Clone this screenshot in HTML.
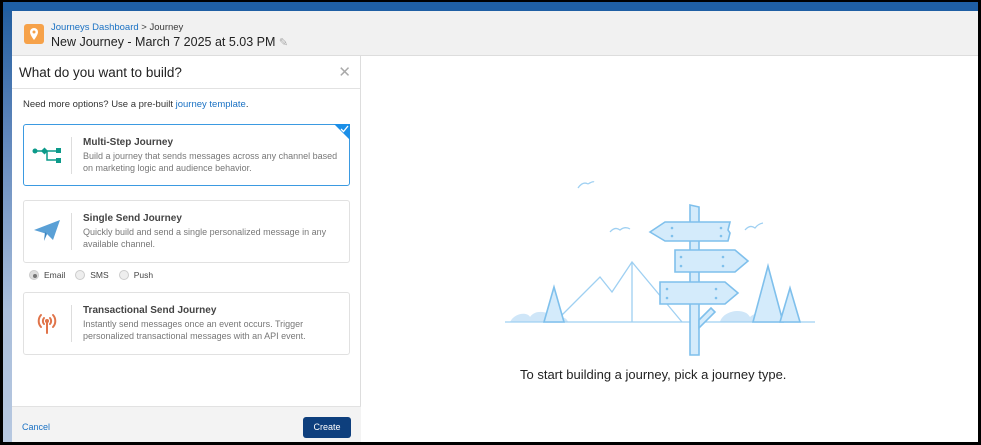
<!DOCTYPE html>
<html><head><style>
*{box-sizing:border-box;margin:0;padding:0}
body{width:981px;height:445px;overflow:hidden;background:#000;font-family:"Liberation Sans",sans-serif;position:relative}
.frame{position:absolute;left:3px;top:2px;width:975px;height:440px;background:#fff;overflow:hidden}
.strip{position:absolute;left:0;top:0;width:9px;height:440px;background:linear-gradient(#1f5c9e 0%,#5f86bb 30%,#a9bedb 70%,#b7c8e0 100%)}
.topband{position:absolute;left:0;top:0;width:975px;height:9px;background:#1f5fa4}
.hdr{position:absolute;left:9px;top:9px;width:966px;height:45px;background:#f1f1f1;border-bottom:1px solid #ddd}
.logo{position:absolute;left:12px;top:13px;width:20px;height:20px;background:#f6a24a;border-radius:3px}
.crumb{position:absolute;left:39px;top:11px;font-size:9.5px;color:#3a3a3a}
.crumb a{color:#1b72c4}
.title{position:absolute;left:39px;top:24px;font-size:12.5px;color:#222}
.panel{position:absolute;left:9px;top:54px;width:349px;height:386px;background:#fff;border-right:1px solid #ddd}
.ph{height:33px;border-bottom:1px solid #e2e2e2;font-size:13.5px;color:#222;padding:9px 0 0 7px;position:relative}
.x{position:absolute;right:9px;top:7px;font-size:15px;color:#aaa}
.need{position:absolute;left:11px;top:43px;font-size:9.5px;color:#333}
.need a{color:#1b72c4}
.card{position:absolute;left:11px;width:327px;background:#fff;border:1px solid #e1e1e1;border-radius:3px}
.card .ic{position:absolute;left:8px;top:14px;width:30px;height:30px}
.card .sep{position:absolute;left:47px;top:12px;width:1px;height:37px;background:#ddd}
.card h4{position:absolute;left:59px;top:12px;font-size:10px;color:#444;font-weight:bold}
.card p{position:absolute;left:59px;top:25px;font-size:9px;color:#777;line-height:12px;width:265px}
.radios{position:absolute;left:17px;top:214px;font-size:8.5px;color:#444}
.radios span{display:inline-block;margin-right:10px}
.radios i{display:inline-block;width:10px;height:10px;border-radius:50%;border:1px solid #ccc;background:#eee;vertical-align:-2px;margin-right:5px;position:relative}
.foot{position:absolute;left:0;top:350px;width:349px;height:36px;background:#f3f3f3;border-top:1px solid #e2e2e2}
.cancel{position:absolute;left:10px;top:15px;font-size:9px;color:#1b72c4}
.create{position:absolute;right:10px;top:10px;width:48px;height:21px;background:#0e3f7d;color:#fff;font-size:9px;text-align:center;line-height:21px;border-radius:3px}
.msg{position:absolute;left:517px;top:365px;font-size:13px;color:#222}
</style></head><body>
<div class="frame">
<div class="strip"></div><div class="topband"></div>
<div class="hdr">
<div class="logo"><svg width="20" height="20" viewBox="0 0 20 20"><path d="M10 4a4 4 0 0 0-4 4c0 3 4 8 4 8s4-5 4-8a4 4 0 0 0-4-4z" fill="#fff"/><circle cx="10" cy="8" r="1.5" fill="#f6a24a"/></svg></div>
<div class="crumb"><a>Journeys Dashboard</a> &gt; Journey</div>
<div class="title">New Journey - March 7 2025 at 5.03 PM <span style="color:#aaa;font-size:11px">✎</span></div>
</div>
<div class="panel">
<div class="ph">What do you want to build?<span class="x">✕</span></div>
<div class="need">Need more options? Use a pre-built <a>journey template</a>.</div>
<div class="card" style="top:68px;height:62px;border:1.5px solid #3b9ae1">
<svg style="position:absolute;right:-1px;top:-1px" width="16" height="16"><path d="M0 0h16v16z" fill="#1b8fe8"/><path d="M7 5l2.5 2.5L14 2" stroke="#fff" stroke-width="1.3" fill="none"/></svg>
<svg class="ic" viewBox="0 0 30 30"><g fill="#0c9a8a"><circle cx="3" cy="12" r="2.5"/><rect x="10" y="9.5" width="5" height="5" transform="rotate(45 12.5 12)"/><rect x="24" y="9" width="5" height="5"/><rect x="24" y="19" width="5" height="5"/></g><path d="M3 12h24M15 12v9h10" stroke="#0c9a8a" stroke-width="1.5" fill="none"/></svg>
<div class="sep"></div><h4>Multi-Step Journey</h4><p>Build a journey that sends messages across any channel based on marketing logic and audience behavior.</p></div>
<div class="card" style="top:144px;height:63px">
<svg class="ic" viewBox="0 0 30 30"><path d="M2 15L28 5 21 25 15 19z" fill="#5aa0d6"/><path d="M15 19l-3 7 1-9z" fill="#3b84bf"/></svg>
<div class="sep"></div><h4>Single Send Journey</h4><p>Quickly build and send a single personalized message in any available channel.</p></div>
<div class="radios"><span><i style="background:#ddd"><b style="position:absolute;left:2.5px;top:2.5px;width:4px;height:4px;border-radius:50%;background:#777"></b></i>Email</span><span><i></i>SMS</span><span><i></i>Push</span></div>
<div class="card" style="top:236px;height:63px">
<svg class="ic" viewBox="0 0 30 30"><g stroke="#e0744a" stroke-width="2" fill="none" stroke-linecap="round"><path d="M9 8a9 9 0 0 0 0 12M21 8a9 9 0 0 1 0 12M12 11a4.5 4.5 0 0 0 0 6M18 11a4.5 4.5 0 0 1 0 6M15 15v11"/></g><circle cx="15" cy="14" r="2" fill="#e0744a"/></svg>
<div class="sep"></div><h4>Transactional Send Journey</h4><p>Instantly send messages once an event occurs. Trigger personalized transactional messages with an API event.</p></div>
<div class="foot"><span class="cancel">Cancel</span><span class="create">Create</span></div>
</div>
<svg style="position:absolute;left:497px;top:178px" width="330" height="180" viewBox="0 0 330 180">
<g fill="#cfe6f8" stroke="none">
<path d="M10 142c5-10 18-10 20-5 5-8 20-6 25 2 5-3 12-2 13 3z"/>
<path d="M220 142c3-12 25-15 30-5 8-8 25-4 28 5z"/>
</g>
<g fill="none" stroke="#9fd0f2" stroke-width="1.3">
<path d="M5 142h310"/><path d="M55 142l45-45 12 15 20-30 50 60"/><path d="M132 82v60"/>
<path d="M78 8q5-7 10-4M88 4q5-3 6-2M110 52q5-6 10-2q5-4 10-1M245 50q5-6 10-2q3-4 8-5"/>
</g>
<g fill="#d4ebfb" stroke="#7fc0ec" stroke-width="1.6">
<path d="M54 107l-10 35h20z"/><path d="M268 86l-15 56h30z"/><path d="M290 108l-10 34h20z"/>
<path d="M190 25l9 2v148h-9z"/>
<path d="M150 52l15-10h65l-2 8 2 3-2 8h-63z"/>
<path d="M175 70h60l13 11-13 11h-60z"/>
<path d="M160 102h65l13 11-13 11h-65z"/>
<path d="M199 140l12-12 4 4-16 16z"/>
</g>
<g fill="#7fc0ec"><circle cx="172" cy="48" r="1.3"/><circle cx="172" cy="56" r="1.3"/><circle cx="221" cy="48" r="1.3"/><circle cx="221" cy="56" r="1.3"/><circle cx="181" cy="77" r="1.3"/><circle cx="181" cy="86" r="1.3"/><circle cx="223" cy="77" r="1.3"/><circle cx="223" cy="86" r="1.3"/><circle cx="167" cy="109" r="1.3"/><circle cx="167" cy="118" r="1.3"/><circle cx="216" cy="109" r="1.3"/><circle cx="216" cy="118" r="1.3"/></g>
</svg>
<div class="msg">To start building a journey, pick a journey type.</div>
</div>
</body></html>
